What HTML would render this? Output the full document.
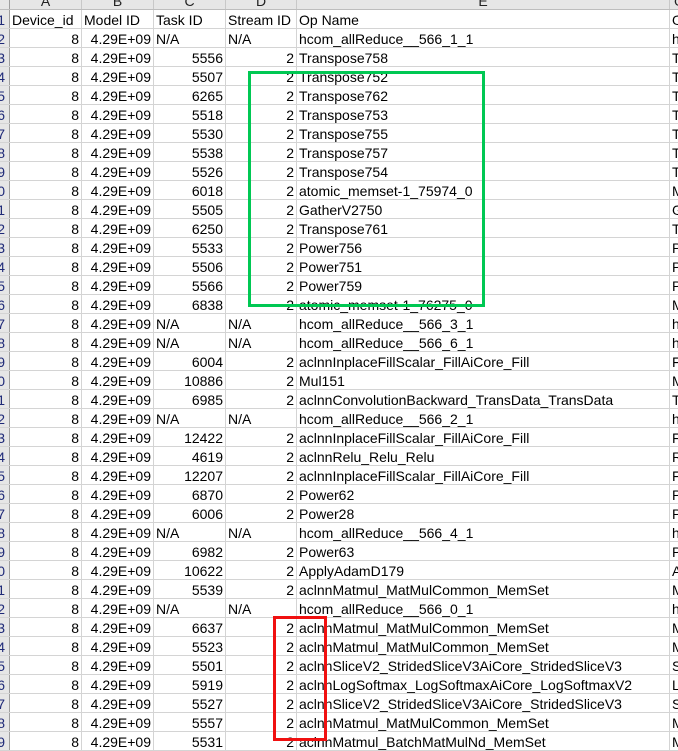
<!DOCTYPE html>
<html><head><meta charset="utf-8"><style>
*{margin:0;padding:0;box-sizing:border-box}
body{width:678px;height:748px;overflow:hidden;background:#fff;font-family:"Liberation Sans","Noto Sans CJK SC",sans-serif;font-size:14px;color:#000;position:relative}
.r{position:absolute;left:0;height:19px;width:900px;display:flex;border-bottom:1px solid #d4d4d4;line-height:18px;white-space:nowrap}
.r>div{flex-shrink:0;height:18px;border-right:1px solid #d4d4d4;overflow:hidden;padding:2px 2px 0 2px;line-height:17px}
.r>.h{width:10px;background:#e6e6e6;border-right:1px solid #9e9e9e;color:#1f2a78;text-align:right;padding:2px 0 0 0;direction:rtl}
.h span{display:inline-block;margin-right:4px}
.a{width:72px;text-align:right}
.b{width:72px;text-align:right}
.c{width:72px;text-align:right}
.d{width:71px;text-align:right}
.e{width:373px}
.f{width:60px}
.l{text-align:left!important}
.hdr{position:absolute;top:0;left:0;height:10px;width:900px;background:#e6e6e6;border-bottom:1px solid #bdbdbd;display:flex;overflow:hidden}
.hdr div{flex-shrink:0;height:10px;border-right:1px solid #c8c8c8;text-align:center;line-height:10px;position:relative;overflow:hidden;color:#222}
.hdr div span{position:absolute;left:0;right:0;top:-7px;line-height:16px}
</style></head><body>
<div class="hdr"><div style="width:10px;border-right:1px solid #9e9e9e"></div><div style="width:72px"><span>A</span></div><div style="width:72px"><span>B</span></div><div style="width:72px"><span>C</span></div><div style="width:71px"><span>D</span></div><div style="width:373px"><span>E</span></div><div style="width:60px"><span style="left:4px;right:auto">G</span></div></div>
<div class="r" style="top:10px"><div class="h"><span>1</span></div><div class="a l">Device_id</div><div class="b l">Model ID</div><div class="c l">Task ID</div><div class="d l">Stream ID</div><div class="e">Op Name</div><div class="f">O</div></div>
<div class="r" style="top:29px"><div class="h"><span>2</span></div><div class="a">8</div><div class="b">4.29E+09</div><div class="c l">N/A</div><div class="d l">N/A</div><div class="e">hcom_allReduce__566_1_1</div><div class="f">h</div></div>
<div class="r" style="top:48px"><div class="h"><span>3</span></div><div class="a">8</div><div class="b">4.29E+09</div><div class="c">5556</div><div class="d">2</div><div class="e">Transpose758</div><div class="f">T</div></div>
<div class="r" style="top:67px"><div class="h"><span>4</span></div><div class="a">8</div><div class="b">4.29E+09</div><div class="c">5507</div><div class="d">2</div><div class="e">Transpose752</div><div class="f">T</div></div>
<div class="r" style="top:86px"><div class="h"><span>5</span></div><div class="a">8</div><div class="b">4.29E+09</div><div class="c">6265</div><div class="d">2</div><div class="e">Transpose762</div><div class="f">T</div></div>
<div class="r" style="top:105px"><div class="h"><span>6</span></div><div class="a">8</div><div class="b">4.29E+09</div><div class="c">5518</div><div class="d">2</div><div class="e">Transpose753</div><div class="f">T</div></div>
<div class="r" style="top:124px"><div class="h"><span>7</span></div><div class="a">8</div><div class="b">4.29E+09</div><div class="c">5530</div><div class="d">2</div><div class="e">Transpose755</div><div class="f">T</div></div>
<div class="r" style="top:143px"><div class="h"><span>8</span></div><div class="a">8</div><div class="b">4.29E+09</div><div class="c">5538</div><div class="d">2</div><div class="e">Transpose757</div><div class="f">T</div></div>
<div class="r" style="top:162px"><div class="h"><span>9</span></div><div class="a">8</div><div class="b">4.29E+09</div><div class="c">5526</div><div class="d">2</div><div class="e">Transpose754</div><div class="f">T</div></div>
<div class="r" style="top:181px"><div class="h"><span>0</span></div><div class="a">8</div><div class="b">4.29E+09</div><div class="c">6018</div><div class="d">2</div><div class="e">atomic_memset-1_75974_0</div><div class="f">M</div></div>
<div class="r" style="top:200px"><div class="h"><span>1</span></div><div class="a">8</div><div class="b">4.29E+09</div><div class="c">5505</div><div class="d">2</div><div class="e">GatherV2750</div><div class="f">G</div></div>
<div class="r" style="top:219px"><div class="h"><span>2</span></div><div class="a">8</div><div class="b">4.29E+09</div><div class="c">6250</div><div class="d">2</div><div class="e">Transpose761</div><div class="f">T</div></div>
<div class="r" style="top:238px"><div class="h"><span>3</span></div><div class="a">8</div><div class="b">4.29E+09</div><div class="c">5533</div><div class="d">2</div><div class="e">Power756</div><div class="f">P</div></div>
<div class="r" style="top:257px"><div class="h"><span>4</span></div><div class="a">8</div><div class="b">4.29E+09</div><div class="c">5506</div><div class="d">2</div><div class="e">Power751</div><div class="f">P</div></div>
<div class="r" style="top:276px"><div class="h"><span>5</span></div><div class="a">8</div><div class="b">4.29E+09</div><div class="c">5566</div><div class="d">2</div><div class="e">Power759</div><div class="f">P</div></div>
<div class="r" style="top:295px"><div class="h"><span>6</span></div><div class="a">8</div><div class="b">4.29E+09</div><div class="c">6838</div><div class="d">2</div><div class="e">atomic_memset-1_76275_0</div><div class="f">M</div></div>
<div class="r" style="top:314px"><div class="h"><span>7</span></div><div class="a">8</div><div class="b">4.29E+09</div><div class="c l">N/A</div><div class="d l">N/A</div><div class="e">hcom_allReduce__566_3_1</div><div class="f">h</div></div>
<div class="r" style="top:333px"><div class="h"><span>8</span></div><div class="a">8</div><div class="b">4.29E+09</div><div class="c l">N/A</div><div class="d l">N/A</div><div class="e">hcom_allReduce__566_6_1</div><div class="f">h</div></div>
<div class="r" style="top:352px"><div class="h"><span>9</span></div><div class="a">8</div><div class="b">4.29E+09</div><div class="c">6004</div><div class="d">2</div><div class="e">aclnnInplaceFillScalar_FillAiCore_Fill</div><div class="f">F</div></div>
<div class="r" style="top:371px"><div class="h"><span>0</span></div><div class="a">8</div><div class="b">4.29E+09</div><div class="c">10886</div><div class="d">2</div><div class="e">Mul151</div><div class="f">M</div></div>
<div class="r" style="top:390px"><div class="h"><span>1</span></div><div class="a">8</div><div class="b">4.29E+09</div><div class="c">6985</div><div class="d">2</div><div class="e">aclnnConvolutionBackward_TransData_TransData</div><div class="f">T</div></div>
<div class="r" style="top:409px"><div class="h"><span>2</span></div><div class="a">8</div><div class="b">4.29E+09</div><div class="c l">N/A</div><div class="d l">N/A</div><div class="e">hcom_allReduce__566_2_1</div><div class="f">h</div></div>
<div class="r" style="top:428px"><div class="h"><span>3</span></div><div class="a">8</div><div class="b">4.29E+09</div><div class="c">12422</div><div class="d">2</div><div class="e">aclnnInplaceFillScalar_FillAiCore_Fill</div><div class="f">F</div></div>
<div class="r" style="top:447px"><div class="h"><span>4</span></div><div class="a">8</div><div class="b">4.29E+09</div><div class="c">4619</div><div class="d">2</div><div class="e">aclnnRelu_Relu_Relu</div><div class="f">R</div></div>
<div class="r" style="top:466px"><div class="h"><span>5</span></div><div class="a">8</div><div class="b">4.29E+09</div><div class="c">12207</div><div class="d">2</div><div class="e">aclnnInplaceFillScalar_FillAiCore_Fill</div><div class="f">F</div></div>
<div class="r" style="top:485px"><div class="h"><span>6</span></div><div class="a">8</div><div class="b">4.29E+09</div><div class="c">6870</div><div class="d">2</div><div class="e">Power62</div><div class="f">P</div></div>
<div class="r" style="top:504px"><div class="h"><span>7</span></div><div class="a">8</div><div class="b">4.29E+09</div><div class="c">6006</div><div class="d">2</div><div class="e">Power28</div><div class="f">P</div></div>
<div class="r" style="top:523px"><div class="h"><span>8</span></div><div class="a">8</div><div class="b">4.29E+09</div><div class="c l">N/A</div><div class="d l">N/A</div><div class="e">hcom_allReduce__566_4_1</div><div class="f">h</div></div>
<div class="r" style="top:542px"><div class="h"><span>9</span></div><div class="a">8</div><div class="b">4.29E+09</div><div class="c">6982</div><div class="d">2</div><div class="e">Power63</div><div class="f">P</div></div>
<div class="r" style="top:561px"><div class="h"><span>0</span></div><div class="a">8</div><div class="b">4.29E+09</div><div class="c">10622</div><div class="d">2</div><div class="e">ApplyAdamD179</div><div class="f">A</div></div>
<div class="r" style="top:580px"><div class="h"><span>1</span></div><div class="a">8</div><div class="b">4.29E+09</div><div class="c">5539</div><div class="d">2</div><div class="e">aclnnMatmul_MatMulCommon_MemSet</div><div class="f">M</div></div>
<div class="r" style="top:599px"><div class="h"><span>2</span></div><div class="a">8</div><div class="b">4.29E+09</div><div class="c l">N/A</div><div class="d l">N/A</div><div class="e">hcom_allReduce__566_0_1</div><div class="f">h</div></div>
<div class="r" style="top:618px"><div class="h"><span>3</span></div><div class="a">8</div><div class="b">4.29E+09</div><div class="c">6637</div><div class="d">2</div><div class="e">aclnnMatmul_MatMulCommon_MemSet</div><div class="f">M</div></div>
<div class="r" style="top:637px"><div class="h"><span>4</span></div><div class="a">8</div><div class="b">4.29E+09</div><div class="c">5523</div><div class="d">2</div><div class="e">aclnnMatmul_MatMulCommon_MemSet</div><div class="f">M</div></div>
<div class="r" style="top:656px"><div class="h"><span>5</span></div><div class="a">8</div><div class="b">4.29E+09</div><div class="c">5501</div><div class="d">2</div><div class="e">aclnnSliceV2_StridedSliceV3AiCore_StridedSliceV3</div><div class="f">S</div></div>
<div class="r" style="top:675px"><div class="h"><span>6</span></div><div class="a">8</div><div class="b">4.29E+09</div><div class="c">5919</div><div class="d">2</div><div class="e">aclnnLogSoftmax_LogSoftmaxAiCore_LogSoftmaxV2</div><div class="f">L</div></div>
<div class="r" style="top:694px"><div class="h"><span>7</span></div><div class="a">8</div><div class="b">4.29E+09</div><div class="c">5527</div><div class="d">2</div><div class="e">aclnnSliceV2_StridedSliceV3AiCore_StridedSliceV3</div><div class="f">S</div></div>
<div class="r" style="top:713px"><div class="h"><span>8</span></div><div class="a">8</div><div class="b">4.29E+09</div><div class="c">5557</div><div class="d">2</div><div class="e">aclnnMatmul_MatMulCommon_MemSet</div><div class="f">M</div></div>
<div class="r" style="top:732px"><div class="h"><span>9</span></div><div class="a">8</div><div class="b">4.29E+09</div><div class="c">5531</div><div class="d">2</div><div class="e">aclnnMatmul_BatchMatMulNd_MemSet</div><div class="f">M</div></div>
<div style="position:absolute;left:248px;top:71px;width:237px;height:236px;border:3px solid #00c853"></div>
<div style="position:absolute;left:273px;top:616px;width:54px;height:125px;border:3px solid #f01010"></div>
</body></html>
